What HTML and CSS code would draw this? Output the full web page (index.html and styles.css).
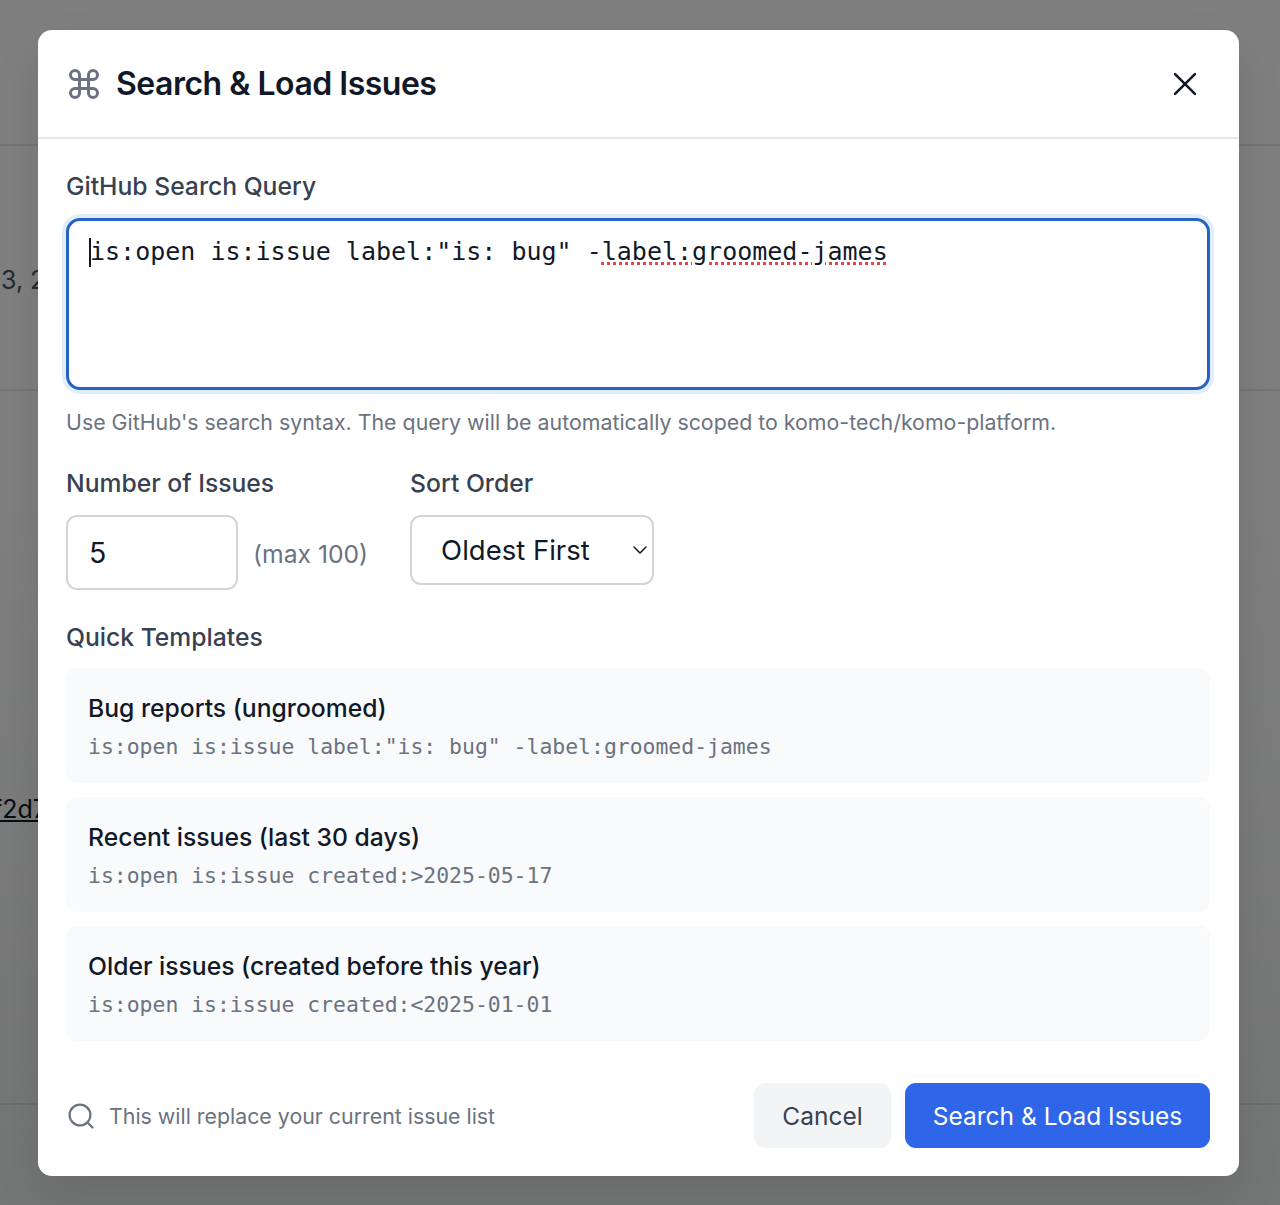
FILE: index.html
```html
<!DOCTYPE html>
<html lang="en">
<head>
<meta charset="utf-8">
<title>Search &amp; Load Issues</title>
<link rel="stylesheet" href="styles.css">
</head>
<body>
<main class="page">
  <div class="row row-a"></div>
  <div class="row row-b"><span class="date">3, 2025</span></div>
  <div class="row row-c"><a class="sha">f2d7</a></div>
  <div class="row row-d"></div>
</main>
<div class="overlay">
  <section class="modal" role="dialog" aria-label="Search &amp; Load Issues">
    <header class="modal-head">
      <svg class="cmd-icon" viewBox="0 0 24 24" fill="none" stroke="currentColor" stroke-width="2" stroke-linecap="round" stroke-linejoin="round"><path d="M15 6v12a3 3 0 1 0 3-3H6a3 3 0 1 0 3 3V6a3 3 0 1 0-3 3h12a3 3 0 1 0-3-3"/></svg>
      <h2 class="modal-title">Search &amp; Load Issues</h2>
      <button class="close" aria-label="Close">
        <svg viewBox="0 0 24 24" fill="none" stroke="currentColor" stroke-width="2.2" stroke-linecap="round"><path d="M3.5 3.5l17 17M20.5 3.5l-17 17"/></svg>
      </button>
    </header>
    <div class="modal-body">
      <label class="field-label">GitHub Search Query</label>
      <div class="query" role="textbox"><span class="caret"></span>is:open is:issue label:"is: bug" -<span class="misspelt">label:groomed-james</span></div>
      <p class="help">Use GitHub's search syntax. The query will be automatically scoped to komo-tech/komo-platform.</p>
      <div class="controls">
        <div class="control">
          <label class="field-label">Number of Issues</label>
          <div class="count-row">
            <input class="count" type="text" value="5">
            <span class="max">(max 100)</span>
          </div>
        </div>
        <div class="control">
          <label class="field-label">Sort Order</label>
          <div class="select-wrap">
            <select class="sort"><option>Oldest First</option><option>Newest First</option></select>
            <svg class="chevron" viewBox="0 0 16 10" fill="none" stroke="currentColor" stroke-width="1.5" stroke-linecap="round" stroke-linejoin="round"><path d="M2 2l6 6 6-6"/></svg>
          </div>
        </div>
      </div>
      <label class="field-label templates-label">Quick Templates</label>
      <div class="templates">
        <div class="template"><div class="t-name">Bug reports (ungroomed)</div><code class="t-query">is:open is:issue label:"is: bug" -label:groomed-james</code></div>
        <div class="template"><div class="t-name">Recent issues (last 30 days)</div><code class="t-query">is:open is:issue created:&gt;2025-05-17</code></div>
        <div class="template"><div class="t-name">Older issues (created before this year)</div><code class="t-query">is:open is:issue created:&lt;2025-01-01</code></div>
      </div>
    </div>
    <footer class="modal-foot">
      <div class="note">
        <svg class="search-icon" viewBox="0 0 26 26" fill="none" stroke="currentColor" stroke-width="2.2" stroke-linecap="round" stroke-linejoin="round"><circle cx="12" cy="12" r="10.4"/><path d="M24.5 24.5l-5-5"/></svg>
        <span>This will replace your current issue list</span>
      </div>
      <div class="actions">
        <button class="btn btn-cancel">Cancel</button>
        <button class="btn btn-primary">Search &amp; Load Issues</button>
      </div>
    </footer>
  </section>
</div>
</body>
</html>
```
FILE: styles.css
```css
* { box-sizing: border-box; }
html, body { margin: 0; height: 100%; }
body {
  font-family: Inter, "Liberation Sans", sans-serif;
  background: #fff;
  overflow: hidden;
}
.page { height: 1205px; display: flex; flex-direction: column; font-size: 25px; color: #4b5563; }
.row { border-bottom: 2px solid #e5e7eb; }
.row-a { height: 146px; }
.row-b { height: 245px; padding: 119px 0 0 1px; }
.row-c { height: 714px; padding: 403px 0 0 0; }
.row-d { flex: 1; border-bottom: 0; }
.sha { color: #111827; text-decoration: underline; margin-left: -7px; display: inline-block; }
.overlay {
  position: absolute;
  inset: 0;
  background: linear-gradient(180deg, rgba(0, 0, 0, 0.5) 0%, rgba(0, 0, 0, 0.5) 40%, rgba(2, 6, 4, 0.55) 100%);
  display: flex;
  align-items: flex-start;
  justify-content: center;
  padding: 30px 41px 0 38px;
}
.modal {
  width: 1201px;
  height: 1146px;
  background: #fff;
  border-radius: 14px;
  box-shadow: 0 20px 45px rgba(0, 0, 0, 0.1);
  display: flex;
  flex-direction: column;
}
.modal-head {
  height: 109px;
  flex: none;
  display: flex;
  align-items: center;
  padding: 0 29px;
  border-bottom: 2px solid #e5e7eb;
}
.cmd-icon { width: 36px; height: 36px; color: #6b7280; margin-right: 14px; margin-left: -1px; flex: none; }
.modal-title { margin: 0; font-size: 32px; font-weight: 600; color: #111827; letter-spacing: -0.5px; flex: 1; }
.close { width: 28px; height: 28px; padding: 0; border: 0; background: none; color: #111827; margin-right: 11px; }
.close svg { width: 28px; height: 28px; display: block; }
.modal-body { padding: 29px 29px 0 28px; flex: 1; }
.field-label { display: block; font-size: 24.7px; line-height: 36px; font-weight: 500; color: #374151; }
.query {
  position: relative;
  margin-top: 14px;
  height: 172px;
  border: 3.5px solid #2463c0;
  border-radius: 14px;
  box-shadow: 0 0 0 4px #e1edfb;
  padding: 13px 19px;
  font-family: "DejaVu Sans Mono", "Liberation Mono", monospace;
  font-size: 25px;
  line-height: 36px;
  color: #111827;
  white-space: pre;
}
.caret { display: inline-block; width: 0; height: 29px; border-left: 2px solid #111827; vertical-align: -7px; margin-left: 1px; margin-right: -1px; }
.misspelt { text-decoration: underline dotted #e0474c 2.5px; text-underline-offset: 2px; }
.help { margin: 14px 0 0; font-size: 21.35px; line-height: 36px; color: #6b7280; }
.controls { display: flex; gap: 42px; margin-top: 25px; }
.count-row { display: flex; align-items: center; gap: 15px; margin-top: 14px; }
.count {
  width: 172px;
  height: 75px;
  border: 2px solid #d1d5db;
  border-radius: 11px;
  padding: 0 21px;
  font: 400 28.5px Inter, sans-serif;
  color: #111827;
  background: #fff;
}
.max { font-size: 24.7px; color: #6b7280; position: relative; top: 1px; }
.select-wrap { position: relative; margin-top: 14px; width: 244px; height: 70px; }
.sort {
  appearance: none;
  width: 100%;
  height: 100%;
  border: 2px solid #d1d5db;
  border-radius: 11px;
  padding: 0 0 0 29px;
  font: 400 27.5px Inter, sans-serif;
  color: #111827;
  background: #fff;
}
.chevron { position: absolute; right: 6px; top: 30px; width: 16px; height: 10px; color: #111827; pointer-events: none; }
.templates-label { margin-top: 29px; }
.templates { display: flex; flex-direction: column; gap: 14px; margin-top: 13px; }
.template { height: 115px; background: #f9fafb; border-radius: 11px; padding: 22px 22px 0; }
.t-name { font-size: 24.7px; line-height: 36px; font-weight: 500; color: #111827; }
.t-query { display: block; margin-top: 3px; font-family: "DejaVu Sans Mono", "Liberation Mono", monospace; font-size: 21.43px; line-height: 36px; color: #6b7280; }
.modal-foot { flex: none; display: flex; align-items: center; justify-content: space-between; padding: 0 29px 28px 30px; }
.note { display: flex; align-items: center; gap: 15px; font-size: 21.35px; color: #6b7280; }
.search-icon { width: 26px; height: 26px; flex: none; }
.actions { display: flex; gap: 14px; }
.btn { height: 65px; border: 0; border-radius: 11px; font: 400 24.5px Inter, sans-serif; padding: 0; white-space: nowrap; }
.btn-cancel { background: #f3f4f6; color: #374151; width: 137px; }
.btn-primary { background: #2f65e8; color: #fff; width: 305px; }
```
